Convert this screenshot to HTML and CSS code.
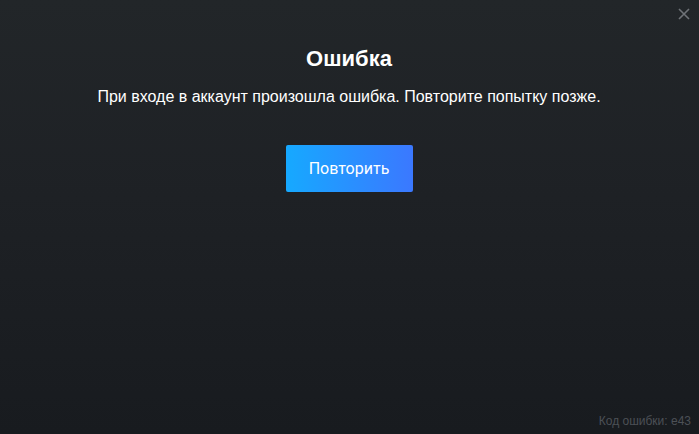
FILE: index.html
```html
<!DOCTYPE html>
<html lang="ru">
<head>
    <meta charset="UTF-8">
    <meta name="viewport" content="width=device-width, initial-scale=1.0">
    <title>Ошибка</title>
    <link rel="stylesheet" href="styles.css">
</head>
<body>

    <div class="window">
        <button class="close-btn" aria-label="Закрыть">
            <svg width="12" height="12" viewBox="0 0 12 12">
                <path d="M1 1 L11 11 M11 1 L1 11" stroke="#6f7378" stroke-width="1.6" fill="none"/>
            </svg>
        </button>

        <div class="content">
            <h2 class="title">Ошибка</h2>
            <p class="message">При входе в аккаунт произошла ошибка. Повторите попытку позже.</p>
            <button class="retry-btn">Повторить</button>
        </div>

        <div class="footer">Код ошибки: e43</div>
    </div>

</body>
</html>
```

FILE: styles.css
```css
html, body {
    margin: 0;
    padding: 0;
    height: 100%;
}
body {
    font-family: "Liberation Sans", Arial, sans-serif;
    background: linear-gradient(to bottom, #222629 0%, #1e2125 45%, #181b1f 100%);
    color: #fff;
}
.window {
    position: relative;
    height: 100vh;
    display: flex;
    flex-direction: column;
    box-sizing: border-box;
}
.close-btn {
    position: absolute;
    top: 7px;
    right: 8px;
    width: 14px;
    height: 14px;
    padding: 1px;
    border: none;
    background: none;
    cursor: pointer;
}
.content {
    display: flex;
    flex-direction: column;
    align-items: center;
    padding-top: 47px;
    padding-right: 1px;
}
.title {
    margin: 0;
    font-size: 22px;
    font-weight: bold;
    line-height: 24px;
}
.message {
    margin: 16px 0 0;
    font-size: 16px;
    line-height: 20px;
}
.retry-btn {
    margin-top: 38px;
    width: 127px;
    height: 47px;
    border: none;
    border-radius: 2px;
    background: linear-gradient(to right, #16a9ff, #3b78ff);
    color: #fff;
    font-family: Roboto, sans-serif;
    font-size: 16px;
    cursor: pointer;
}
.footer {
    margin-top: auto;
    padding: 0 8px 6px 0;
    text-align: right;
    font-size: 12px;
    line-height: 14px;
    color: #4c5056;
}
```
